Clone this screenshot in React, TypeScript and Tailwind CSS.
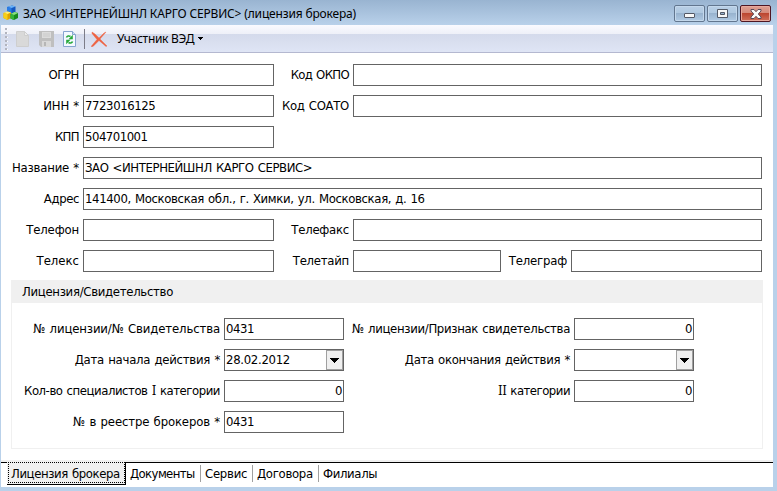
import type { ReactNode } from "react";

const ui = "font-['DejaVu_Sans_Condensed','DejaVu_Sans',sans-serif] [font-stretch:condensed] [word-spacing:0.8px]";
const caption = "font-['Noto_Sans','Open_Sans',sans-serif] [font-stretch:normal] [word-spacing:0px]";

function Label({ children, className }: { children: ReactNode; className: string }) {
  return <label className={`mr-1 flex shrink-0 justify-end whitespace-pre leading-[22px] ${className}`}><span>{children}</span></label>;
}

function Field({ value = "", className, right }: { value?: string; className: string; right?: boolean }) {
  return (
    <div className={`h-[22px] shrink-0 border border-[#646464] bg-white whitespace-pre pl-px pr-px leading-[20px] ${right ? "text-right" : ""} ${className}`}>
      {value}
    </div>
  );
}

function DateField({ value = "" }: { value?: string }) {
  return (
    <div className="flex h-[22px] w-[120px] shrink-0 border border-[#646464] bg-white pl-px leading-[20px]">
      <span className="flex-1 tracking-[-0.3px]">{value}</span>
      <span className="flex h-5 w-[17px] items-center justify-center border border-[#a0a0a0] bg-[#f0f0f0]">
        <svg width="9" height="5" viewBox="0 0 9 5" shapeRendering="crispEdges"><path d="M0 0h9v1H8v1H7v1H6v1H5v1H4V4H3V3H2V2H1V1H0z" /></svg>
      </span>
    </div>
  );
}

function AppIcon() {
  return (
    <svg width="16" height="16" viewBox="0 0 16 16">
      <path d="M4 2l5-1.500 3.500 1V7L8.500 9 4 7.500z" fill="#1458c0" />
      <path d="M4 2l5-1.500 3.500 1L8.500 3z" fill="#6ab4fa" />
      <path d="M4 2l4.500 1V9L4 7.500z" fill="#2b7de6" />
      <path d="M0.500 8l4-1.500 3.500 1V13l-3.500 2L0.500 13z" fill="#e0a400" />
      <path d="M0.500 8l4-1.500 3.500 1L4.500 9z" fill="#fff078" />
      <path d="M0.500 8l4 1v6l-4-2z" fill="#f8cf17" />
      <path d="M7.500 9l4-2 3.500 1V13l-4 2-3.500-1.500z" fill="#178b1c" />
      <path d="M7.500 9l4-2 3.500 1-4 2z" fill="#8ce080" />
      <path d="M7.500 9l3.500 1v5l-3.500-1.500z" fill="#35b53a" />
    </svg>
  );
}

function WindowButton({ children, close }: { children: ReactNode; close?: boolean }) {
  return (
    <span className={`flex h-[17px] w-[31px] items-center justify-center rounded-[2px] border ${close
      ? "border-[#4e1623] bg-[linear-gradient(#dda094_0,#d58878_48%,#bc4630_50%,#d0705a_100%)] shadow-[inset_0_0_0_1px_#e8a89c]"
      : "border-[#62768f] bg-[linear-gradient(#b9cfe6_0,#afc8e0_48%,#98b3cf_50%,#b0cae4_100%)] shadow-[inset_0_0_0_1px_#c4d8ec]"}`}>
      {children}
    </span>
  );
}

const tabs = [
  { name: "Документы", box: "w-[75px] tracking-[-0.6px]" },
  { name: "Сервис", box: "w-[52px] tracking-[-0.25px]" },
  { name: "Договора", box: "w-[66px] tracking-[-0.3px]" },
  { name: "Филиалы", box: "w-[70px] tracking-[-0.35px]" },
];

export default function App() {
  return (
    <div className={`flex h-[491px] w-[777px] flex-col overflow-hidden bg-[#b9d1ea] text-[13px] tracking-[-0.4px] text-black ${ui}`}>
      <header className="flex h-[25px] shrink-0 items-start bg-linear-to-b from-[#99b4d1] to-[#b9d1ea] pl-[3px] pr-[6px]">
        <div className="pt-[5px]"><AppIcon /></div>
        <h1 className={`ml-[4px] flex-1 pt-[4px] text-[12px] leading-[20px] tracking-[-0.16px] whitespace-pre ${caption}`}>
          ЗАО &lt;ИНТЕРНЕЙШНЛ КАРГО СЕРВИС&gt; (лицензия брокера)
        </h1>
        <div className="flex gap-[2px] pt-[5px]">
          <WindowButton>
            <svg className="mt-1" width="11" height="5" viewBox="0 0 11 5"><rect x=".5" y=".5" width="10" height="4" rx=".5" fill="#f8f8f8" stroke="#535966" /></svg>
          </WindowButton>
          <WindowButton>
            <svg width="11" height="9" viewBox="0 0 11 9"><path fillRule="evenodd" d="M.5.5h10v8H.5zM3.500 3.500h4v2h-4z" fill="#f8f8f8" stroke="#535966" /></svg>
          </WindowButton>
          <WindowButton close>
            <svg width="12" height="10" viewBox="0 0 12 10"><path d="M1 .5h3L6 2.700 8 .5h3V2L8.300 5 11 8v1.500H8L6 7.300 4 9.500H1V8l2.700-3L1 2z" fill="#fafafa" stroke="#5a4a58" /></svg>
          </WindowButton>
        </div>
      </header>

      <div className="mr-1 ml-px flex h-[462px] shrink-0 flex-col bg-white">
        <div className="flex h-[28px] shrink-0 items-center border-b border-[#b4b8d0] bg-[linear-gradient(#fafaff_0,#eef0f8_9px,#d4daeb_9px,#dfe5f5_27px)]">
          <svg className="ml-1 shrink-0" width="3" height="22" viewBox="0 0 3 22" shapeRendering="crispEdges">
            {[0, 4, 8, 12, 16, 20].map((y) => <g key={y}><rect x="1" y={y + 1} width="2" height="1" fill="#fff" /><rect y={y} width="2" height="2" fill="#b2b4be" /></g>)}
          </svg>
          <svg className="ml-2 shrink-0" width="13" height="16" viewBox="0 0 13 16"><path d="M.5.5h8l4 4v11H.5z" fill="#d9d9d9" stroke="#cecece" /><path d="M8.500.5v4h4z" fill="#ececec" stroke="#cecece" /></svg>
          <svg className="ml-[10px] shrink-0" width="15" height="16" viewBox="0 0 15 16"><path d="M0 0h15v16H2l-2-2z" fill="#bfbfbf" /><path d="M3 1h9v6H3z" fill="#dcdcdc" /><path d="M4 3h7M4 5h7" stroke="#cacaca" /><path d="M3 10h9v6H3z" fill="#d8d8d8" /><path d="M5 11h2v4H5z" fill="#b6b6b6" /></svg>
          <svg className="ml-[9px] shrink-0" width="13" height="16" viewBox="0 0 13 16">
            <path d="M.5.5h9l3 3v12H.5z" fill="#f4f9ff" stroke="#86a4cf" /><path d="M9.500.5v3h3" fill="#cfe0f5" stroke="#86a4cf" />
            <path d="M3.500 6.500c.5-1.500 2.500-2 4-1M9.500 10.500c-.5 1.500-2.500 2-4 1" fill="none" stroke="#27a93a" strokeWidth="1.600" />
            <path d="M9.800 3.800v4.400H5.500zM3.200 13.200V8.800h4.300z" fill="#27a93a" />
          </svg>
          <span className="ml-2 h-5 w-px bg-[#7c7c88]" />
          <svg className="ml-[6px] shrink-0" width="17" height="16" viewBox="0 0 17 16"><path d="M1 1l3 2 4 4 5-5 2-1-6 7 7 7-1 .5-7-6-6 6H0l6-7-5-6z" fill="#ee6342" stroke="#ee6342" strokeWidth=".4" /></svg>
          <span className={`ml-[9px] w-[77px] shrink-0 text-[12px] tracking-[-0.3px] whitespace-pre ${caption}`}>Участник ВЭД</span>
          <svg className="ml-[4px] shrink-0" width="5" height="3" viewBox="0 0 5 3" shapeRendering="crispEdges"><path d="M0 0h5v1H4v1H3v1H2V2H1V1H0z" /></svg>
        </div>

        <main className="flex h-[407px] shrink-0 flex-col px-[10px] pt-[11px]">
          <div className="flex flex-col gap-[9px]">
            <div className="flex"><Label className="w-[68px]">ОГРН</Label><Field className="w-[191px]" /><Label className="w-[75px] tracking-[-0.65px]">Код ОКПО</Label><Field className="w-[409px]" /></div>
            <div className="flex"><Label className="w-[68px] tracking-[-0.2px]">ИНН *</Label><Field className="w-[191px]" value="7723016125" /><Label className="w-[75px] tracking-[-0.3px]">Код СОАТО</Label><Field className="w-[409px]" /></div>
            <div className="flex"><Label className="w-[68px] tracking-[-0.6px]">КПП</Label><Field className="w-[191px] tracking-[-0.5px]" value="504701001" /></div>
            <div className="flex"><Label className="w-[68px] tracking-[-0.2px]">Название *</Label><Field className="w-[679px]" value="ЗАО <ИНТЕРНЕЙШНЛ КАРГО СЕРВИС>" /></div>
            <div className="flex"><Label className="w-[68px]">Адрес</Label><Field className="w-[679px] tracking-[-0.36px]" value="141400, Московская обл., г. Химки, ул. Московская, д. 16" /></div>
            <div className="flex"><Label className="w-[68px] tracking-[-0.15px]">Телефон</Label><Field className="w-[191px]" /><Label className="w-[75px] tracking-[-0.25px]">Телефакс</Label><Field className="w-[409px]" /></div>
            <div className="flex"><Label className="w-[68px] tracking-[0px]">Телекс</Label><Field className="w-[191px]" /><Label className="w-[75px] tracking-[-0.25px]">Телетайп</Label><Field className="w-[148px]" /><Label className="w-[66px] tracking-[-0.2px]">Телеграф</Label><Field className="w-[191px]" /></div>
          </div>

          <section className="mt-2 h-[169px] w-[752px] shrink-0 border border-t-0 border-[#f0f0f0]">
            <h2 className="h-[23px] bg-[#f0f0f0] pl-[10px] leading-[23px] tracking-[-0.3px]">Лицензия/Свидетельство</h2>
            <div className="flex flex-col gap-[9px] pt-[15px]">
              <div className="flex"><Label className="w-[208px] tracking-[-0.13px]">№ лицензии/№ Свидетельства</Label><Field className="w-[120px]" value="0431" /><Label className="w-[226px] tracking-[-0.32px]">№ лицензии/Признак свидетельства</Label><Field right className="w-[120px]" value="0" /></div>
              <div className="flex"><Label className="w-[208px] tracking-[-0.25px]">Дата начала действия *</Label><DateField value="28.02.2012" /><Label className="w-[226px] tracking-[-0.3px]">Дата окончания действия *</Label><DateField /></div>
              <div className="flex"><Label className="w-[208px] tracking-[-0.45px]">Кол-во специалистов <span className="font-['DejaVu_Serif']">I</span> категории</Label><Field right className="w-[120px]" value="0" /><Label className="w-[226px] tracking-[-0.5px]"><span className="font-['DejaVu_Serif']">II</span> категории</Label><Field right className="w-[120px]" value="0" /></div>
              <div className="flex"><Label className="w-[208px] tracking-[-0.15px]">№ в реестре брокеров *</Label><Field className="w-[120px]" value="0431" /></div>
            </div>
          </section>
        </main>

        <nav className="flex h-[27px] shrink-0 bg-[linear-gradient(#f0f0f0_0_2px,#000_2px_3px,#fff_3px)]">
          <div className="mt-[2px] ml-[6px] h-[23px] w-[119px] border-r border-b border-black bg-[#f0f0f0] pl-px">
            <div className="h-[21px] w-[117px] border border-dotted border-black pl-[2px] leading-[21px] whitespace-pre">Лицензия брокера</div>
          </div>
          {tabs.map((t, i) => (
            <div key={t.name} className={`mt-[5px] h-[17px] pl-[4px] leading-[17px] whitespace-pre ${i < 3 ? "border-r border-[#a0a0a0]" : ""} ${t.box}`}>{t.name}</div>
          ))}
        </nav>
      </div>
    </div>
  );
}
